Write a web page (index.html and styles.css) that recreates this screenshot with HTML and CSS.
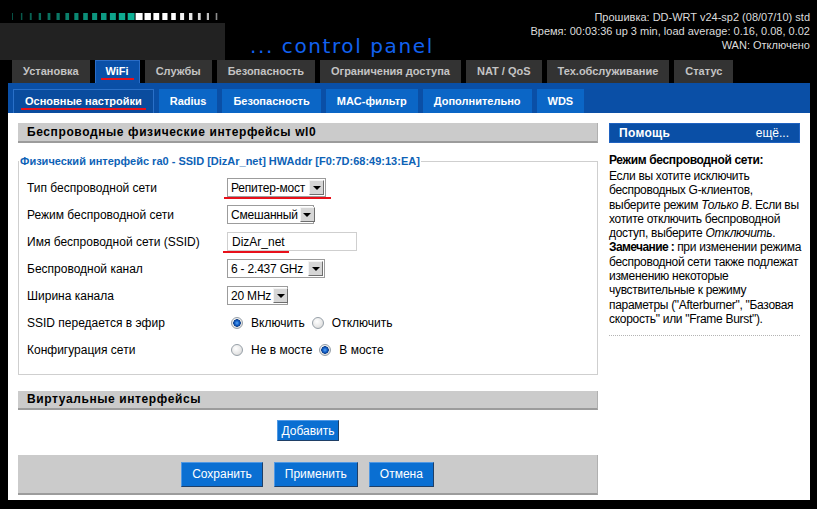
FILE: index.html
```html
<!DOCTYPE html>
<html lang="ru">
<head>
<meta charset="utf-8">
<title>DD-WRT</title>
<link rel="stylesheet" href="styles.css">
</head>
<body>
<div class="page">
  <header class="header">
    <div class="logo">
      <svg class="logo-bars" width="225" height="23" viewBox="0 0 225 23">
        <g class="teal">
          <rect x="12" y="13" width="1" height="7" opacity="0.45"/>
          <rect x="20.9" y="13" width="1.45" height="7" opacity="0.5"/>
          <rect x="29.8" y="13" width="1.9" height="7" opacity="0.55"/>
          <rect x="38.7" y="13" width="2.35" height="7" opacity="0.6"/>
          <rect x="47.6" y="13" width="2.8" height="7" opacity="0.64"/>
          <rect x="56.5" y="13" width="3.25" height="7" opacity="0.68"/>
          <rect x="65.4" y="13" width="3.7" height="7" opacity="0.72"/>
          <rect x="74.3" y="13" width="4.15" height="7" opacity="0.76"/>
          <rect x="83.2" y="13" width="4.6" height="7" opacity="0.8"/>
          <rect x="92.1" y="13" width="5.05" height="7" opacity="0.84"/>
          <rect x="101" y="13" width="5.5" height="7" opacity="0.88"/>
          <rect x="109.9" y="13" width="5.95" height="7" opacity="0.92"/>
          <rect x="118.8" y="13" width="6.4" height="7" opacity="0.96"/>
          <rect x="127.7" y="13" width="6.85" height="7"/>
        </g>
        <g class="white">
          <rect x="135.6" y="13" width="7" height="7"/>
          <rect x="144.5" y="13" width="6.4" height="7"/>
          <rect x="153.4" y="13" width="5.8" height="7"/>
          <rect x="162.3" y="13" width="5.2" height="7"/>
          <rect x="171.2" y="13" width="4.6" height="7"/>
          <rect x="180.1" y="13" width="4" height="7" opacity="0.95"/>
          <rect x="189" y="13" width="3.4" height="7" opacity="0.9"/>
          <rect x="197.9" y="13" width="2.8" height="7" opacity="0.85"/>
          <rect x="206.8" y="13" width="2.2" height="7" opacity="0.75"/>
          <rect x="215.7" y="13" width="1.6" height="7" opacity="0.55"/>
        </g>
      </svg>
      <div class="logo-box"></div>
    </div>
    <div class="cp">... control panel</div>
    <div class="info">
      <div>Прошивка: DD-WRT v24-sp2 (08/07/10) std</div>
      <div>Время: 00:03:36 up 3 min, load average: 0.16, 0.08, 0.02</div>
      <div>WAN: Отключено</div>
    </div>
  </header>

  <nav class="tabs">
    <div class="tab">Установка</div>
    <div class="tab active"><span class="uline">WiFi</span></div>
    <div class="tab">Службы</div>
    <div class="tab">Безопасность</div>
    <div class="tab">Ограничения доступа</div>
    <div class="tab">NAT / QoS</div>
    <div class="tab">Тех.обслуживание</div>
    <div class="tab">Статус</div>
  </nav>

  <div class="frame">
    <nav class="subtabs">
      <div class="subtab active"><span class="uline">Основные настройки</span></div>
      <div class="subtab">Radius</div>
      <div class="subtab">Безопасность</div>
      <div class="subtab">MAC-фильтр</div>
      <div class="subtab">Дополнительно</div>
      <div class="subtab">WDS</div>
    </nav>

    <div class="content">
      <main class="main">
        <h2 class="sechead">Беспроводные физические интерфейсы wl0</h2>
        <fieldset class="fs">
          <legend class="legend">Физический интерфейс ra0 - SSID [DizAr_net] HWAddr [F0:7D:68:49:13:EA]</legend>
          <div class="row">
            <div class="lbl">Тип беспроводной сети</div>
            <span class="mark">
              <span class="sel w98"><span class="sel-text">Репитер-мост</span><span class="sel-btn"><i class="tri"></i></span></span>
              <span class="redline r-sel"></span>
            </span>
          </div>
          <div class="row">
            <div class="lbl">Режим беспроводной сети</div>
            <span class="sel w86"><span class="sel-text">Смешанный</span><span class="sel-btn"><i class="tri"></i></span></span>
          </div>
          <div class="row">
            <div class="lbl">Имя беспроводной сети (SSID)</div>
            <span class="mark">
              <span class="inp">DizAr_net</span>
              <span class="redline r-inp"></span>
            </span>
          </div>
          <div class="row">
            <div class="lbl">Беспроводной канал</div>
            <span class="sel w97"><span class="sel-text">6 - 2.437 GHz</span><span class="sel-btn"><i class="tri"></i></span></span>
          </div>
          <div class="row">
            <div class="lbl">Ширина канала</div>
            <span class="sel w60"><span class="sel-text">20 MHz</span><span class="sel-btn"><i class="tri"></i></span></span>
          </div>
          <div class="row">
            <div class="lbl">SSID передается в эфир</div>
            <span class="radio on"></span><span class="rlabel">Включить</span>
            <span class="radio"></span><span class="rlabel">Отключить</span>
          </div>
          <div class="row">
            <div class="lbl">Конфигурация сети</div>
            <span class="radio"></span><span class="rlabel">Не в мосте</span>
            <span class="radio on"></span><span class="rlabel">В мосте</span>
          </div>
        </fieldset>

        <h2 class="sechead virt">Виртуальные интерфейсы</h2>
        <div class="addwrap"><button class="btn small">Добавить</button></div>

        <div class="footer">
          <button class="btn">Сохранить</button>
          <button class="btn">Применить</button>
          <button class="btn">Отмена</button>
        </div>
      </main>

      <aside class="help">
        <div class="helphead"><span class="ht">Помощь</span><span class="more">ещё...</span></div>
        <h3 class="helptitle">Режим беспроводной сети:</h3>
        <p class="helptext">Если вы хотите исключить<br>беспроводных G-клиентов,<br>выберите режим <i>Только B</i>. Если вы<br>хотите отключить беспроводной<br>доступ, выберите <i>Отключить</i>.<br><b>Замечание :</b> при изменении режима<br>беспроводной сети также подлежат<br>изменению некоторые<br>чувствительные к режиму<br>параметры ("Afterburner", "Базовая<br>скорость" или "Frame Burst").</p>
      </aside>
    </div>
  </div>
</div>
</body>
</html>
```
FILE: styles.css
```css
* { box-sizing: border-box; margin: 0; padding: 0; }
html, body { background: #000; }
body {
  width: 817px;
  height: 509px;
  overflow: hidden;
  font-family: "Liberation Sans", Arial, sans-serif;
  font-size: 12px;
  color: #000;
}

/* header */
.header { display: flex; height: 60px; }
.logo { width: 225px; display: flex; flex-direction: column; }
.logo-bars { display: block; height: 23px; }
.logo-bars .teal rect { fill: #0fb196; }
.logo-bars .white rect { fill: #ffffff; }
.logo-box { flex: 1; background: #222; }
.cp {
  align-self: flex-end;
  margin-left: 25px;
  padding-bottom: 4px;
  font-family: "DejaVu Sans", sans-serif;
  font-size: 20px;
  line-height: 20px;
  letter-spacing: 1.6px;
  color: #1262f0;
  white-space: nowrap;
}
.info {
  margin-left: auto;
  padding: 10px 7px 0 0;
  text-align: right;
  color: #dcdcdc;
  font-size: 11px;
  line-height: 14px;
  white-space: nowrap;
}

/* main tabs */
.tabs { display: flex; gap: 5px; padding-left: 12px; height: 23px; }
.tab {
  background: #333;
  color: #c4c4c4;
  font-size: 11px;
  font-weight: bold;
  line-height: 23px;
  padding: 0 11px;
  white-space: nowrap;
}
.tab.active {
  background: #0a50a8;
  color: #fff;
  padding: 0 5px;
  border: 1px solid #2a6cc6;
  border-bottom: 0;
  line-height: 21px;
}
.uline {
  display: inline-block;
  line-height: 14px;
  border-bottom: 2px solid #e8101a;
}
.tab .uline { padding: 0 5px; }

/* blue frame */
.frame { margin: 0 7px 0 8px; background: #0a4fa6; }
.subtabs { display: flex; gap: 5px; height: 30px; padding: 6px 0 0 5px; }
.subtab {
  background: #0b66c6;
  color: #fff;
  font-size: 11px;
  font-weight: bold;
  line-height: 24px;
  padding: 0 11px;
  white-space: nowrap;
}
.subtab.active {
  background: #0a4c9e;
  border: 1px solid #2a70c8;
  border-bottom: 0;
  line-height: 22px;
  padding: 0 7px;
}
.subtab .uline { padding: 0 4px; }

/* content */
.content {
  background: #fff;
  height: 387px;
  display: flex;
  padding: 0 10px;
}
.main { width: 580px; padding-top: 10px; }
.sechead {
  height: 20px;
  background: #cbcbcb;
  border-bottom: 2px solid #9c9c9c;
  border-right: 1px solid #b0b0b0;
  padding-left: 9px;
  font-size: 12px;
  line-height: 18px;
  letter-spacing: 0.6px;
  font-weight: bold;
  color: #000;
}
.fs {
  margin-top: 12px;
  border: 1px solid #cfcfcf;
  padding: 6px 0 11px 8px;
}
.legend {
  margin-left: -8px;
  padding: 0 1px;
  font-size: 11px;
  line-height: 13px;
  font-weight: bold;
  color: #0d62b6;
}
.row { height: 27px; display: flex; align-items: center; }
.lbl { width: 200px; }

.mark { position: relative; display: inline-flex; }
.redline { position: absolute; height: 2px; background: #e8101a; }
.r-sel { left: -3px; bottom: -2px; width: 107px; }
.r-inp { left: -4px; bottom: -2px; width: 66px; }

.sel {
  display: inline-flex;
  align-items: center;
  justify-content: space-between;
  height: 19px;
  border: 1px solid #9c9c9c;
  background: #fff;
  padding: 0 1px 0 3px;
}
.w98 { width: 99px; }
.w86 { width: 87px; }
.w97 { width: 98px; }
.w60 { width: 61px; }
.sel-text { white-space: nowrap; letter-spacing: -0.2px; }
.sel-btn {
  width: 15px;
  height: 15px;
  margin-left: 2px;
  flex: none;
  background: #d6d6d6;
  border: 1px solid;
  border-color: #f4f4f4 #6e6e6e #6e6e6e #f4f4f4;
  display: flex;
  align-items: center;
  justify-content: center;
}
.tri {
  width: 0; height: 0;
  border-left: 4px solid transparent;
  border-right: 4px solid transparent;
  border-top: 4px solid #000;
  margin-top: 1px;
}
.inp {
  display: inline-flex;
  align-items: center;
  width: 130px;
  height: 19px;
  border: 1px solid #cfcfcf;
  padding-left: 4px;
  background: #fff;
}

.radio {
  width: 12px;
  height: 12px;
  border-radius: 50%;
  border: 1px solid #97a0a8;
  background: radial-gradient(circle at 40% 35%, #ffffff 0, #e6e6e6 60%, #c9c9c9 100%);
  margin-left: 4px;
  flex: none;
}
.radio.on {
  background:
    radial-gradient(circle at 50% 50%, #5aa8f0 0, #1664d0 2px, #0a3e8a 3.5px, rgba(255,255,255,0) 4px),
    radial-gradient(circle at 40% 35%, #ffffff 0, #e6e6e6 60%, #c9c9c9 100%);
}
.rlabel { margin-left: 8px; margin-right: 3px; white-space: nowrap; }

.virt { margin-top: 16px; height: 19px; line-height: 17px; }
.addwrap { margin-top: 10px; display: flex; justify-content: center; }
.btn {
  font-family: "Liberation Sans", Arial, sans-serif;
  font-size: 12px;
  color: #fff;
  background: #0a6fd2;
  border: 1px solid;
  border-color: #4f98e4 #1f3f66 #1f3f66 #4f98e4;
  height: 25px;
  padding: 0 10px;
  cursor: pointer;
}
.btn.small { height: 21px; padding: 0 3px; }
.footer {
  margin-top: 14px;
  height: 40px;
  background: #cbcbcb;
  border-bottom: 2px solid #9c9c9c;
  border-right: 1px solid #b0b0b0;
  display: flex;
  align-items: center;
  justify-content: center;
  gap: 11px;
}

/* help */
.help { width: 191px; margin-left: 11px; padding-top: 10px; }
.helphead {
  height: 20px;
  background: #0a4fa6;
  border: 1px solid #1f62c0;
  display: flex;
  justify-content: space-between;
  align-items: center;
  padding: 0 10px 0 9px;
  color: #fff;
}
.ht { font-weight: bold; letter-spacing: 0.3px; }
.helptitle {
  margin-top: 10px;
  font-size: 12px;
  line-height: 14px;
  font-weight: bold;
  letter-spacing: -0.35px;
}
.helptext {
  margin-top: 2px;
  line-height: 14.3px;
  white-space: nowrap;
  letter-spacing: -0.3px;
  padding-bottom: 9px;
  border-bottom: 1px dotted #b4b4b4;
}
.helptext b { letter-spacing: -0.6px; }
```
